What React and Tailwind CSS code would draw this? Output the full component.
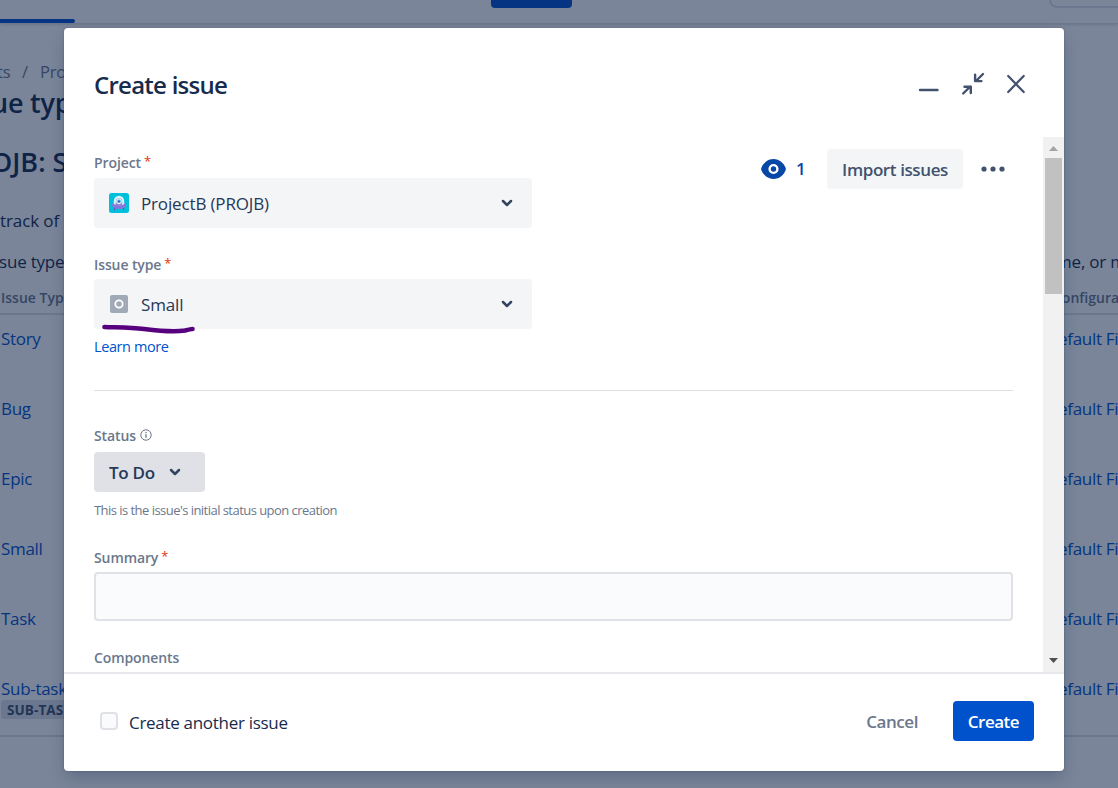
const ROWS = ["Story", "Bug", "Epic", "Small", "Task", "Sub-task"];

function Chevron() {
  return (
    <svg width="12" height="8" viewBox="0 0 12 8" fill="none" stroke="#344563" strokeWidth="2.5" strokeLinecap="round" strokeLinejoin="round">
      <path d="M2 2l4 4 4-4" />
    </svg>
  );
}

function Label({ children, required }) {
  return (
    <div className="flex h-5 items-center pb-[2px] text-[14px] font-semibold tracking-[-0.1px] text-[#6b778c]">
      <span>{children}</span>
      {required && <span className="ml-[3px] text-[13px] font-normal text-[#de350b]">*</span>}
    </div>
  );
}

function BackgroundPage() {
  return (
    <div className="flex h-[788px] w-[1118px] flex-col whitespace-nowrap bg-white text-[#172b4d]">
      <header className="flex h-6 shrink-0 items-start border-b border-[#dfe1e6] shadow-sm">
        <div className="mt-[19px] h-1 w-[75px] shrink-0 rounded-r-sm bg-[#0052cc]" />
        <div className="ml-[416px] h-2 w-[81px] shrink-0 rounded-b bg-[#0052cc]" />
        <div className="ml-[477px] h-2 w-[90px] shrink-0 rounded-bl-lg border-b-2 border-l-2 border-[#dfe1e6]" />
      </header>
      <div className="mt-[36px] flex h-6 items-center text-[16.5px] tracking-[-0.2px] text-[#6b778c]">
        <span className="-ml-[3px] w-[25px]">ts</span>
        <span className="w-[18px]">/</span>
        <span>ProjectB</span>
      </div>
      <div className="-ml-[9px] flex h-10 items-center pb-[2px] text-[27px] font-semibold tracking-[-0.2px]">ue types</div>
      <div className="-ml-[9px] mt-[19px] flex h-10 items-center pb-[2px] text-[27px] font-semibold tracking-[0px]">OJB: Scheme</div>
      <div className="mt-[26px] flex h-6 items-center text-[17px] tracking-[-0.1px]">track of different</div>
      <div className="mt-4 grid h-6 grid-cols-[1056px_1fr] items-center pb-[2px] text-[17px] tracking-[-0.2px]">
        <span className="-ml-[1px]">sue types</span>
        <span>me, or more</span>
      </div>
      <div className="mt-3 grid h-[30px] grid-cols-[1052px_1fr] items-center border-b-2 border-[#dfe1e6] pb-[3px] pl-px text-[14px] font-semibold text-[#6b778c]">
        <span>Issue Type</span>
        <span>Configuration</span>
      </div>
      {ROWS.map((name) => (
        <div key={name} className="grid h-[70px] grid-cols-[1045px_1fr] items-start pl-px pt-3 text-[17px] leading-6 tracking-[-0.3px] text-[#0052cc]">
          <div>
            <div>{name}</div>
            {name === "Sub-task" && (
              <span className="-mt-px flex h-[19px] w-[90px] items-center rounded-[3px] bg-[#dfe1e6] pl-[6px] text-[13.5px] font-bold tracking-[0.1px] text-[#42526e]">SUB-TASK</span>
            )}
          </div>
          <span>Default Field</span>
        </div>
      ))}
      <div className="h-[2px] bg-[#dfe1e6]" />
    </div>
  );
}

function Scrollbar() {
  return (
    <div className="flex w-[21px] shrink-0 flex-col items-center bg-[#f1f1f1]">
      <svg width="21" height="21" viewBox="0 0 21 21"><path d="M6 14l4.5-5 4.5 5z" fill="#a3a3a3" /></svg>
      <div className="h-[136px] w-[17px] bg-[#c1c1c1]" />
      <svg className="mt-auto" width="21" height="21" viewBox="0 0 21 21"><path d="M6 7h9l-4.5 5z" fill="#505050" /></svg>
    </div>
  );
}

function ProjectIcon() {
  return (
    <svg width="20" height="20" viewBox="0 0 20 20">
      <rect width="20" height="20" rx="2.5" fill="#00c0dc" />
      <path d="M5.500 14v3.200M14.500 14v3.200" stroke="#6554c0" strokeWidth="1.200" />
      <path d="M3 11.500c0-1 1-1.500 2-1.500h10c1 0 2 .5 2 1.500 0 3-3 4.500-7 4.500s-7-1.500-7-4.500z" fill="#8777d9" />
      <path d="M4.800 11V8a5.200 5.200 0 0 1 10.400 0v3c-1.500 1.600-8.900 1.600-10.400 0z" fill="#d9f5fb" />
      <path d="M6.800 12.500V8.500a3.200 3.200 0 0 1 6.400 0v4z" fill="#8f86dc" />
      <circle cx="10" cy="8.300" r="2.400" fill="#35bfe0" stroke="#fff" strokeWidth="1" />
      <circle cx="10" cy="8.300" r=".9" fill="#5243aa" />
    </svg>
  );
}

function Select({ icon, children }) {
  return (
    <div className="flex h-[50px] w-[438px] items-center rounded-[4px] bg-[#f4f5f7] pl-[15px] pr-[19px] text-[17px] tracking-[-0.15px] text-[#253858]">
      <span className="flex w-8">{icon}</span>
      <span className="flex-1 pt-[2px]">{children}</span>
      <Chevron />
    </div>
  );
}

function Dialog() {
  return (
    <div className="flex h-[743px] w-[1000px] flex-col rounded-[4px] bg-white shadow-[0_8px_16px_-2px_rgba(9,30,66,0.25),0_0_2px_rgba(9,30,66,0.31)]">
      <header className="flex h-[109px] shrink-0 items-start justify-between pl-[30px] pr-[36px]">
        <h1 className="mt-[37px] text-[24px] font-semibold leading-10 tracking-[-0.75px] text-[#172b4d]">Create issue</h1>
        <svg className="mt-[42px]" width="112" height="28" viewBox="0 0 112 28" fill="none" stroke="#42526e" strokeWidth="2.400" strokeLinecap="round" strokeLinejoin="round">
          <path d="M4 20h17.500" />
          <path d="M47.200 23.500l7-7M48.500 16.700h6.300v6.300" />
          <path d="M67 4l-7 7M59.100 4.800v6.300h6.300" />
          <path d="M92.200 6l15.500 16M107.700 6l-15.500 16" strokeWidth="2.200" />
        </svg>
      </header>
      <div className="flex h-[535px] shrink-0">
        <div className="relative flex h-full flex-1 flex-col overflow-hidden pl-[30px] pr-[30px] pt-4">
          <div className="flex justify-between">
            <div>
              <Label required>Project</Label>
              <div className="mt-[5px]"><Select icon={<ProjectIcon />}>ProjectB (PROJB)</Select></div>
            </div>
            <div className="-mt-1 flex h-10 items-center pr-[8px] text-[17px] text-[#42526e]">
              <svg width="25" height="20" viewBox="0 0 25 20">
                <path d="M12.500 0C6.500 0 2 4.500.4 8.800a3.200 3.200 0 0 0 0 2.400C2 15.500 6.500 20 12.500 20s10.500-4.500 12.100-8.800a3.200 3.200 0 0 0 0-2.400C23 4.500 18.500 0 12.500 0z" fill="#0747a6" />
                <circle cx="12.500" cy="10" r="3.900" fill="#0747a6" stroke="#fff" strokeWidth="2.400" />
              </svg>
              <span className="ml-[10px] w-[9px] font-semibold text-[#0747a6]">1</span>
              <button className="ml-[22px] h-10 w-[136px] rounded-[4px] bg-[#f4f5f7] pt-px font-semibold tracking-[-0.4px]">Import issues</button>
              <svg className="ml-[18px]" width="24" height="6" viewBox="0 0 24 6" fill="#42526e">
                <circle cx="3" cy="3" r="2.600" /><circle cx="12" cy="3" r="2.600" /><circle cx="21" cy="3" r="2.600" />
              </svg>
            </div>
          </div>
          <div className="mt-[27px]"><Label required>Issue type</Label></div>
          <div className="mt-1">
            <Select
              icon={
                <svg className="ml-px" width="18" height="18" viewBox="0 0 18 18">
                  <rect width="18" height="18" rx="2" fill="#a0a9b5" />
                  <circle cx="9" cy="9" r="3.700" fill="none" stroke="#fff" strokeWidth="1.800" />
                </svg>
              }
            >
              Small
            </Select>
          </div>
          <svg className="absolute left-[37px] top-[186px]" width="96" height="12" viewBox="0 0 96 12" fill="none" stroke="#57007f" strokeWidth="4.600" strokeLinecap="round" strokeLinejoin="round">
            <path d="M3.500 4C18 4.500 31 4.500 43 6c16 2 32 3 41 1.500 4-1 6-1.500 7.500-1.500" />
          </svg>
          <a className="mt-[7px] text-[14.500px] leading-[22px] tracking-[-0.4px] text-[#0052cc]">Learn more</a>
          <div className="mt-8 h-px shrink-0 bg-[#dcdfe4]" />
          <div className="mt-[35px] flex items-center gap-1">
            <Label>Status</Label>
            <svg className="-mt-[2px]" width="12" height="12" viewBox="0 0 12 12" fill="none" stroke="#6b778c">
              <circle cx="6" cy="6" r="5.200" /><path d="M6 5.300v3.500" strokeWidth="1.300" /><path d="M6 2.900v1.300" strokeWidth="1.300" />
            </svg>
          </div>
          <button className="mt-[6px] flex h-10 w-[111px] shrink-0 items-center justify-between rounded-[4px] bg-[#dfe1e6] pl-[15px] pr-6 text-[17px] font-semibold tracking-[-0.3px] text-[#253858]">
            <span className="pt-px">To Do</span>
            <Chevron />
          </button>
          <p className="mt-2 text-[13px] leading-5 tracking-[-0.54px] text-[#6b778c]">This is the issue's initial status upon creation</p>
          <div className="mt-7"><Label required>Summary</Label></div>
          <div className="mt-1 h-[49px] shrink-0 rounded-[4px] border-2 border-[#dfe1e6] bg-[#fafbfc]" />
          <div className="mt-[27px]"><Label>Components</Label></div>
        </div>
        <Scrollbar />
      </div>
      <footer className="flex flex-1 items-center border-t-2 border-[#e6e8ec] pl-[36px] pr-[30px] text-[17px] tracking-[-0.3px]">
        <span className="-mt-[4px] h-[18px] w-[18px] rounded-[4px] border-2 border-[#dfe1e6] bg-[#fafbfc]" />
        <span className="ml-[11px] flex-1 text-[#172b4d]">Create another issue</span>
        <span className="-mt-[2px] mr-[35px] font-semibold tracking-[-0.45px] text-[#6b778c]">Cancel</span>
        <button className="-mt-[3px] h-10 w-[81px] rounded-[4px] bg-[#0052cc] pt-px font-semibold tracking-[-0.5px] text-white">Create</button>
      </footer>
    </div>
  );
}

export default function App() {
  return (
    <div className="relative h-[788px] w-[1118px] overflow-hidden font-['Open_Sans','Noto_Sans',sans-serif]">
      <BackgroundPage />
      <div className="absolute inset-0 bg-[#091e42]/54 pl-16 pt-7">
        <Dialog />
      </div>
    </div>
  );
}
